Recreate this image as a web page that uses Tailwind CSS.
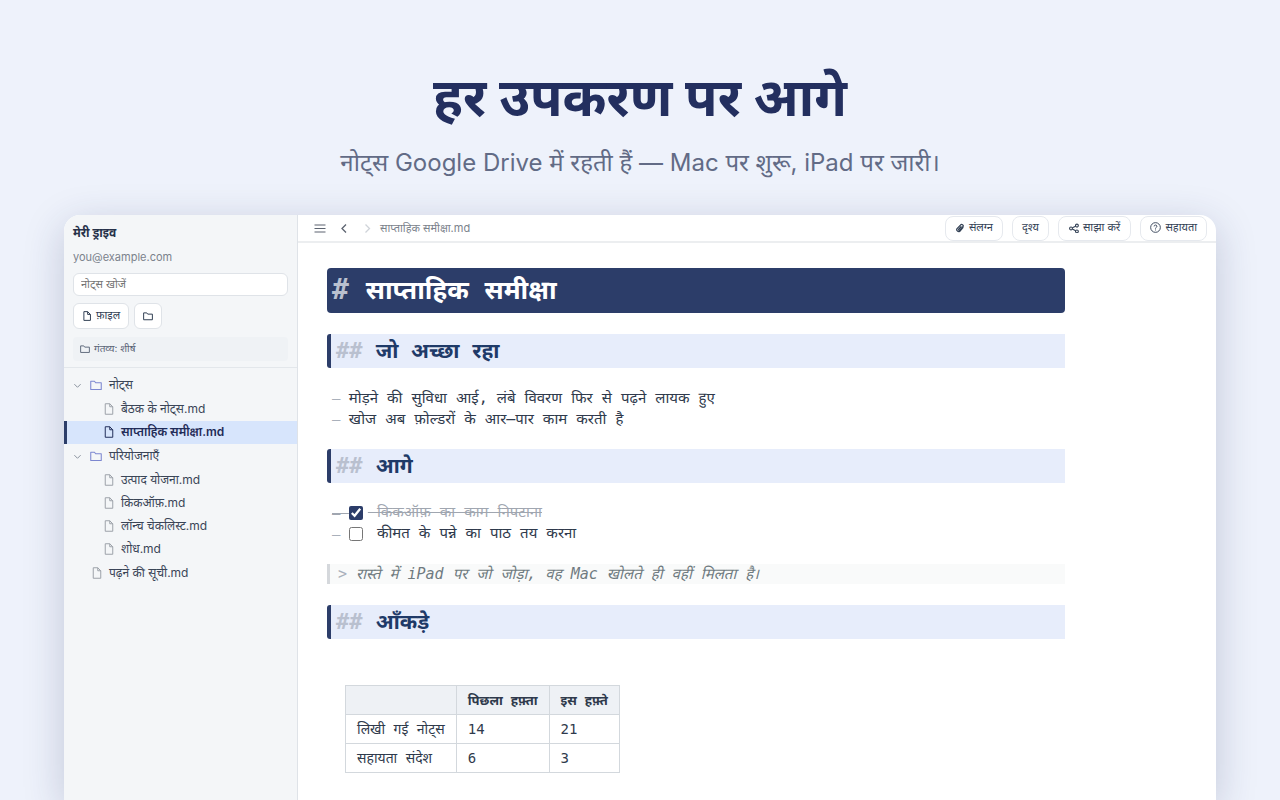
<!DOCTYPE html>
<html lang="hi">

<head>
    <meta charset="UTF-8">
    <meta name="viewport" content="width=device-width, initial-scale=1.0">
    <title>हर उपकरण पर आगे</title>
    <script src="https://cdn.jsdelivr.net/npm/@tailwindcss/browser@4"></script>
</head>

<body class="min-h-screen flex flex-col overflow-hidden bg-[#eef2fb] font-['Inter','Noto_Sans_Devanagari','Noto_Sans',sans-serif] text-[#334155]">
    <!-- Headline -->
    <header class="pt-[60px] text-center">
        <h1 class="text-[53px] leading-[74px] font-bold text-[#232f5f]">हर उपकरण पर आगे</h1>
        <p class="mt-[11px] text-2xl leading-9 text-[#626b86]">नोट्स Google Drive में रहती हैं — Mac पर शुरू, iPad पर जारी।</p>
    </header>

    <!-- App window -->
    <div class="mt-[34px] mx-16 flex-1 flex overflow-hidden rounded-t-2xl bg-white shadow-[0_10px_40px_rgba(35,47,95,0.22)]">
        <!-- Sidebar -->
        <aside class="w-[234px] shrink-0 border-r border-[#dfe3e8] bg-[#f4f6f8]">
            <div class="px-[9px] pt-2 pb-[6px] border-b border-[#e3e7eb]">
                <h2 class="text-xs leading-5 font-bold text-[#27324a]">मेरी ड्राइव</h2>
                <p class="mt-1 text-[11px] leading-5 text-[#7b828c]">you@example.com</p>
                <input type="text" aria-label="नोट्स खोजें" placeholder="नोट्स खोजें" class="mt-[6px] block w-full h-[23px] px-[7px] pb-px rounded-md border border-[#dfe3e8] bg-white text-[11px] placeholder:text-[#757575]">
                <div class="mt-[7px] flex gap-[5px]">
                    <button class="h-[26px] px-2 pb-px flex items-center gap-1 rounded-md border border-[#dfe3e8] bg-white text-[11px]">
                        <svg class="size-[10px]" viewBox="0 0 16 16" fill="none" stroke="currentColor" stroke-width="1.6" stroke-linejoin="round"><path d="M3 1h6l4.500 4.500V15H3zM9 1v4.500h4.500"/></svg>
                        फ़ाइल
                    </button>
                    <button aria-label="फ़ोल्डर" class="h-[26px] px-2 flex items-center rounded-md border border-[#dfe3e8] bg-white">
                        <svg class="size-[10px]" viewBox="0 0 16 16" fill="none" stroke="currentColor" stroke-width="1.6" stroke-linejoin="round"><path d="M1 3h5l1.500 2H15v9H1z"/></svg>
                    </button>
                </div>
                <div class="mt-2 h-6 px-[7px] pb-px flex items-center gap-1 rounded bg-[#eff2f5] text-[10px] text-[#5b6577]">
                    <svg class="size-[10px]" viewBox="0 0 16 16" fill="none" stroke="currentColor" stroke-width="1.5" stroke-linejoin="round"><path d="M1 3h5l1.500 2H15v8.500H1z"/></svg>
                    गंतव्य: शीर्ष
                </div>
            </div>

            <!-- File tree -->
            <ul class="pt-[6px] text-xs text-[#3a4557]">
                <li>
                    <div class="h-[23px] pl-[9px] pb-px flex items-center">
                        <svg class="size-[9px] mr-2 text-[#8a929e]" viewBox="0 0 10 10" fill="none" stroke="currentColor" stroke-width="1.1"><path d="M1.500 3.500 5 7l3.500-3.500"/></svg>
                        <svg class="size-3 mr-[7px] text-[#7c87d0]" viewBox="0 0 16 16" fill="none" stroke="currentColor" stroke-width="1.4" stroke-linejoin="round"><path d="M1 3h5l1.500 2H15v9H1z"/></svg>
                        नोट्स
                    </div>
                    <ul class="py-px">
                        <li class="h-[23px] pl-[39px] pb-px flex items-center">
                            <svg class="size-3 mr-[6px] text-[#9a9fa8]" viewBox="0 0 16 16" fill="none" stroke="currentColor" stroke-width="1.3" stroke-linejoin="round"><path d="M3 1h6L13 5v10H3zM9 1v4h4"/></svg>
                            बैठक के नोट्स.md
                        </li>
                        <li class="h-[23px] pl-9 pb-px flex items-center border-l-3 border-[#2c3d69] bg-[#d7e5fc] font-semibold text-[#1f2b57]">
                            <svg class="size-3 mr-[6px]" viewBox="0 0 16 16" fill="none" stroke="currentColor" stroke-width="1.3" stroke-linejoin="round"><path d="M3 1h6L13 5v10H3zM9 1v4h4"/></svg>
                            साप्ताहिक समीक्षा.md
                        </li>
                    </ul>
                </li>
                <li>
                    <div class="h-[23px] pl-[9px] pb-px flex items-center">
                        <svg class="size-[9px] mr-2 text-[#8a929e]" viewBox="0 0 10 10" fill="none" stroke="currentColor" stroke-width="1.1"><path d="M1.500 3.500 5 7l3.500-3.500"/></svg>
                        <svg class="size-3 mr-[7px] text-[#7c87d0]" viewBox="0 0 16 16" fill="none" stroke="currentColor" stroke-width="1.4" stroke-linejoin="round"><path d="M1 3h5l1.500 2H15v9H1z"/></svg>
                        परियोजनाएँ
                    </div>
                    <ul class="py-px">
                        <li class="h-[23px] pl-[39px] pb-px flex items-center">
                            <svg class="size-3 mr-[6px] text-[#9a9fa8]" viewBox="0 0 16 16" fill="none" stroke="currentColor" stroke-width="1.3" stroke-linejoin="round"><path d="M3 1h6L13 5v10H3zM9 1v4h4"/></svg>
                            उत्पाद योजना.md
                        </li>
                        <li class="h-[23px] pl-[39px] pb-px flex items-center">
                            <svg class="size-3 mr-[6px] text-[#9a9fa8]" viewBox="0 0 16 16" fill="none" stroke="currentColor" stroke-width="1.3" stroke-linejoin="round"><path d="M3 1h6L13 5v10H3zM9 1v4h4"/></svg>
                            किकऑफ़.md
                        </li>
                        <li class="h-[23px] pl-[39px] pb-px flex items-center">
                            <svg class="size-3 mr-[6px] text-[#9a9fa8]" viewBox="0 0 16 16" fill="none" stroke="currentColor" stroke-width="1.3" stroke-linejoin="round"><path d="M3 1h6L13 5v10H3zM9 1v4h4"/></svg>
                            लॉन्च चेकलिस्ट.md
                        </li>
                        <li class="h-[23px] pl-[39px] pb-px flex items-center">
                            <svg class="size-3 mr-[6px] text-[#9a9fa8]" viewBox="0 0 16 16" fill="none" stroke="currentColor" stroke-width="1.3" stroke-linejoin="round"><path d="M3 1h6L13 5v10H3zM9 1v4h4"/></svg>
                            शोध.md
                        </li>
                    </ul>
                </li>
                <li class="h-[23px] pl-[27px] pb-px flex items-center">
                    <svg class="size-3 mr-[6px] text-[#9a9fa8]" viewBox="0 0 16 16" fill="none" stroke="currentColor" stroke-width="1.3" stroke-linejoin="round"><path d="M3 1h6L13 5v10H3zM9 1v4h4"/></svg>
                    पढ़ने की सूची.md
                </li>
            </ul>
        </aside>

        <main class="flex-1 min-w-0">
            <!-- Toolbar -->
            <div class="h-7 pl-4 pr-[9px] flex items-center border-b-2 border-[#eceef0]">
                <button aria-label="मेनू" class="mr-3">
                    <svg class="size-3" viewBox="0 0 12 12" fill="none" stroke="#5c6370" stroke-width="1.1"><path d="M.5 3h11M.5 6.500h11M.5 10h11"/></svg>
                </button>
                <button aria-label="पीछे" class="mr-3">
                    <svg class="size-3" viewBox="0 0 12 12" fill="none" stroke="#5c6370" stroke-width="1.3"><path d="m8 2.500-4 4 4 4"/></svg>
                </button>
                <button aria-label="आगे" class="mr-[6px]">
                    <svg class="size-3" viewBox="0 0 12 12" fill="none" stroke="#cfd3d9" stroke-width="1.3"><path d="m3.500 2.500 4 4-4 4"/></svg>
                </button>
                <span class="text-[11px] text-[#7b828c]">साप्ताहिक समीक्षा.md</span>
                <div class="ml-auto flex gap-[9px] text-[11px]">
                    <button class="h-[25px] px-[9px] pb-px flex items-center gap-1 rounded-lg border border-[#e6e9ee] bg-white">
                        <svg class="size-[10px]" viewBox="0 0 12 12" fill="none" stroke="currentColor" stroke-width="1.500" stroke-linecap="round"><path d="M9.500 5.500 6.500 9.200a2.300 2.300 0 0 1-4-2.500L6.500 2.500a1.700 1.700 0 0 1 3 2L6 8.500a.8.8 0 0 1-1.500-1L7.200 4.500"/></svg>
                        संलग्न
                    </button>
                    <button class="h-[25px] px-[9px] pb-px rounded-lg border border-[#e6e9ee] bg-white">दृश्य</button>
                    <button class="h-[25px] px-[10px] pb-px flex items-center gap-1 rounded-lg border border-[#e6e9ee] bg-white">
                        <svg class="size-[10px]" viewBox="0 0 12 12" fill="none" stroke="currentColor" stroke-width="1.3"><circle cx="2.400" cy="6.500" r="1.700"/><circle cx="9.500" cy="3" r="1.700"/><circle cx="9.500" cy="10" r="1.700"/><path d="m4 5.800 4-2M4 7.300l4 2"/></svg>
                        साझा करें
                    </button>
                    <button class="h-[25px] px-[9px] pb-px flex items-center gap-1 rounded-lg border border-[#e6e9ee] bg-white">
                        <svg class="size-[11px]" viewBox="0 0 12 12" fill="none" stroke="currentColor"><circle cx="6" cy="6" r="5.300"/><path d="M4.500 4.800a1.500 1.500 0 1 1 2.200 1.300Q6 6.500 6 7.200M6 8.200v1"/></svg>
                        सहायता
                    </button>
                </div>
            </div>

            <!-- Note -->
            <article class="mx-[29px] mt-[25px] max-w-[738px] font-['DejaVu_Sans_Mono','Noto_Sans_Devanagari',monospace] text-sm leading-[21px] text-[#2f3a4c]">
                <h1 class="h-[45px] px-[5px] rounded bg-[#2c3d69] text-[26px] leading-[44px] font-bold whitespace-pre text-white"><span class="text-[28px] text-[#b9c0cf]"># </span>साप्ताहिक समीक्षा</h1>

                <h2 class="mt-[21px] pl-[5px] rounded-l-[3px] border-l-4 border-[#2c3d69] bg-[#e7edfb] text-[21px] leading-[34px] font-bold whitespace-pre text-[#1f3a68]"><span class="text-[22px] text-[#b9c0cf]">## </span>जो अच्छा रहा</h2>
                <ul class="mt-5 pl-[5px] text-[15px] leading-[21px]">
                    <li class="h-[21px] whitespace-pre"><span class="text-sm text-[#a9b0bb]">– </span>मोड़ने की सुविधा आई, लंबे विवरण फिर से पढ़ने लायक हुए</li>
                    <li class="h-[21px] whitespace-pre"><span class="text-sm text-[#a9b0bb]">– </span>खोज अब फ़ोल्डरों के आर–पार काम करती है</li>
                </ul>

                <h2 class="mt-[19px] pl-[5px] rounded-l-[3px] border-l-4 border-[#2c3d69] bg-[#e7edfb] text-[21px] leading-[34px] font-bold whitespace-pre text-[#1f3a68]"><span class="text-[22px] text-[#b9c0cf]">## </span>आगे</h2>
                <ul class="mt-[19px] pl-[5px] text-[15px] leading-[21px]">
                    <li class="h-[21px] flex items-center whitespace-pre"><span class="text-sm line-through text-[#a0a6b0]">– </span><input id="task-1" type="checkbox" checked class="size-[14px] mr-[5px] accent-[#2c3d69]"><label for="task-1" class="line-through text-[#a0a6b0]"> किकऑफ़ का काम निपटाना</label></li>
                    <li class="h-[21px] flex items-center whitespace-pre"><span class="text-sm text-[#a9b0bb]">– </span><input id="task-2" type="checkbox" class="size-[14px] mr-[5px] accent-[#2c3d69]"><label for="task-2"> कीमत के पन्ने का पाठ तय करना</label></li>
                </ul>

                <blockquote class="mt-5 pl-2 border-l-3 border-[#d5d8dc] bg-[#f9fafa] h-5 text-[15px] leading-5 italic whitespace-pre text-[#6f7a80]"><span class="not-italic text-[#a9b0bb]">&gt; </span>रास्ते में iPad पर जो जोड़ा, वह Mac खोलते ही वहीं मिलता है।</blockquote>

                <h2 class="mt-[21px] pl-[5px] rounded-l-[3px] border-l-4 border-[#2c3d69] bg-[#e7edfb] text-[21px] leading-[34px] font-bold whitespace-pre text-[#1f3a68]"><span class="text-[22px] text-[#b9c0cf]">## </span>आँकड़े</h2>

                <table class="mt-[46px] ml-[18px] border-collapse text-left">
                    <thead class="text-[13px]">
                        <tr class="bg-[#eef1f5]">
                            <th class="h-[29px] px-[11px] border border-[#d3d8dd]"></th>
                            <th class="h-[29px] px-[11px] border border-[#d3d8dd]">पिछला हफ़्ता</th>
                            <th class="h-[29px] px-[11px] border border-[#d3d8dd]">इस हफ़्ते</th>
                        </tr>
                    </thead>
                    <tbody>
                        <tr>
                            <td class="h-[29px] px-[11px] border border-[#d3d8dd]">लिखी गई नोट्स</td>
                            <td class="h-[29px] px-[11px] border border-[#d3d8dd]">14</td>
                            <td class="h-[29px] px-[11px] border border-[#d3d8dd]">21</td>
                        </tr>
                        <tr>
                            <td class="h-[29px] px-[11px] border border-[#d3d8dd]">सहायता संदेश</td>
                            <td class="h-[29px] px-[11px] border border-[#d3d8dd]">6</td>
                            <td class="h-[29px] px-[11px] border border-[#d3d8dd]">3</td>
                        </tr>
                    </tbody>
                </table>
            </article>
        </main>
    </div>
</body>

</html>
